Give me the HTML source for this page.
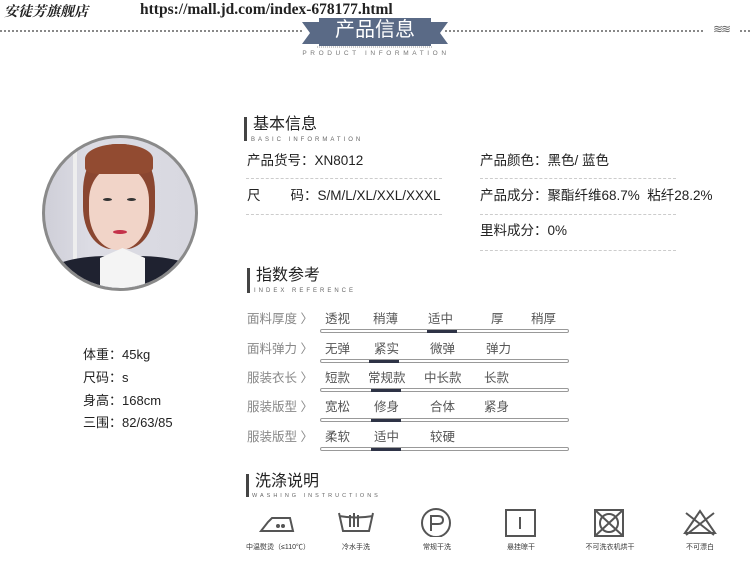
<!DOCTYPE html>
<html><head><meta charset="utf-8"><style>
*{margin:0;padding:0;box-sizing:border-box}
body{width:750px;height:568px;background:#fff;position:relative;overflow:hidden;font-family:"Liberation Sans","Noto Sans CJK SC",sans-serif;color:#333}
.a{position:absolute;white-space:nowrap}
.dot{position:absolute;height:0;border-top:2px dotted #888}
.dash{position:absolute;height:0;border-top:1px dashed #ccc}
.bar{position:absolute;width:3px;background:#444}
.tt{position:absolute;font-size:16px;color:#222;line-height:18px}
.sub{position:absolute;font-size:6px;letter-spacing:3px;color:#666;line-height:6px}
.r{position:absolute;font-size:13.5px;color:#222;line-height:16px}
.lb{position:absolute;font-size:12.5px;color:#888;line-height:14px}
.op{position:absolute;font-size:12.5px;color:#555;line-height:14px}
.tr{position:absolute;left:320px;width:249px;height:4px;border:1px solid #999;border-radius:2px}
.mk{position:absolute;width:30px;height:3px;background:#2e3346}
.wl{position:absolute;font-size:7px;color:#333;line-height:8px;transform:translateX(-50%)}
</style></head><body>
<div class="a" style="left:4px;top:1px;font-size:14px;font-family:'Noto Serif CJK SC',serif;font-style:italic;font-weight:bold;color:#222">安徒芳旗舰店</div>
<div class="a" style="left:140px;top:1px;font-size:15.5px;font-family:'Liberation Serif',serif;font-weight:bold;color:#222">https://mall.jd.com/index-678177.html</div>
<div class="dot" style="left:0;top:30px;width:302px"></div>
<div class="dot" style="left:312px;top:30px;width:0"></div>
<div class="dot" style="left:445px;top:30px;width:258px"></div>
<div class="a" style="left:713px;top:22px;font-size:12px;color:#666;letter-spacing:-2px">≋≋</div>
<div class="dot" style="left:740px;top:30px;width:10px"></div>
<svg class="a" style="left:300px;top:16px" width="150" height="32">
<polygon points="2,6 22,6 22,28 2,28 10,17" fill="#5a6a86"/>
<polygon points="148,6 128,6 128,28 148,28 140,17" fill="#5a6a86"/>
<rect x="19" y="2" width="112" height="28" fill="#5a6a86"/>
<line x1="17" y1="31" x2="133" y2="31" stroke="#999" stroke-dasharray="1,1"/>
</svg>
<div class="a" style="left:319px;top:17px;width:112px;text-align:center;font-size:20px;color:#fff;line-height:26px">产品信息</div>
<div class="a" style="left:300px;top:50px;width:152px;text-align:center;font-size:6.5px;letter-spacing:3.6px;color:#777">PRODUCT INFORMATION</div>

<!-- photo -->
<div class="a" style="left:42px;top:135px;width:156px;height:156px;border-radius:50%;border:3px solid #8a8a8a;overflow:hidden;background:linear-gradient(90deg,#cfcfd8 0,#dcdce4 30%,#d8d8e0 100%)">
<div class="a" style="left:28px;top:0;width:4px;height:156px;background:#eee"></div>
<div class="a" style="left:38px;top:6px;width:72px;height:105px;border-radius:45% 45% 40% 40%;background:#8a4630"></div>
<div class="a" style="left:44px;top:30px;width:60px;height:82px;border-radius:40% 40% 48% 48%;background:#f1d4c8"></div>
<div class="a" style="left:40px;top:6px;width:68px;height:30px;border-radius:50% 50% 20% 20%;background:#924b31"></div>
<div class="a" style="left:58px;top:60px;width:9px;height:3px;background:#333;border-radius:50%"></div>
<div class="a" style="left:82px;top:60px;width:9px;height:3px;background:#333;border-radius:50%"></div>
<div class="a" style="left:68px;top:92px;width:14px;height:4px;background:#c4324a;border-radius:50%"></div>
<div class="a" style="left:0;top:118px;width:156px;height:50px;background:#1f2230;border-radius:40% 40% 0 0"></div>
<div class="a" style="left:55px;top:110px;width:45px;height:50px;background:#f4f4f4;clip-path:polygon(0 20%,50% 0,100% 20%,100% 100%,0 100%)"></div>
</div>
<div class="r" style="left:83px;top:347px;font-size:13px">体重：45kg</div>
<div class="r" style="left:83px;top:370px;font-size:13px">尺码：s</div>
<div class="r" style="left:83px;top:393px;font-size:13px">身高：168cm</div>
<div class="r" style="left:83px;top:415px;font-size:13px">三围：82/63/85</div>

<!-- basic info -->
<div class="bar" style="left:244px;top:117px;height:24px"></div>
<div class="tt" style="left:253px;top:116px">基本信息</div>
<div class="sub" style="left:251px;top:137px">BASIC INFORMATION</div>
<div class="r" style="left:247px;top:153px">产品货号：XN8012</div>
<div class="r" style="left:247px;top:188px">尺&nbsp;&nbsp;&nbsp;&nbsp;&nbsp;&nbsp;&nbsp;&nbsp;码：S/M/L/XL/XXL/XXXL</div>
<div class="r" style="left:480px;top:153px">产品颜色：黑色/ 蓝色</div>
<div class="r" style="left:480px;top:188px">产品成分：聚酯纤维68.7%&nbsp;&nbsp;粘纤28.2%</div>
<div class="r" style="left:480px;top:223px">里料成分：0%</div>
<div class="dash" style="left:246px;top:178px;width:196px"></div>
<div class="dash" style="left:246px;top:214px;width:196px"></div>
<div class="dash" style="left:480px;top:178px;width:196px"></div>
<div class="dash" style="left:480px;top:214px;width:196px"></div>
<div class="dash" style="left:480px;top:250px;width:196px"></div>

<!-- index -->
<div class="bar" style="left:247px;top:268px;height:25px"></div>
<div class="tt" style="left:256px;top:267px">指数参考</div>
<div class="sub" style="left:254px;top:288px">INDEX REFERENCE</div>

<div class="lb" style="left:247px;top:312px">面料厚度 〉</div>
<div class="op" style="left:325px;top:312px">透视</div><div class="op" style="left:373px;top:312px">稍薄</div><div class="op" style="left:428px;top:312px">适中</div><div class="op" style="left:491px;top:312px">厚</div><div class="op" style="left:531px;top:312px">稍厚</div>
<div class="tr" style="top:329px"></div><div class="mk" style="left:427px;top:330px"></div>

<div class="lb" style="left:247px;top:342px">面料弹力 〉</div>
<div class="op" style="left:325px;top:342px">无弹</div><div class="op" style="left:374px;top:342px">紧实</div><div class="op" style="left:430px;top:342px">微弹</div><div class="op" style="left:486px;top:342px">弹力</div>
<div class="tr" style="top:359px"></div><div class="mk" style="left:369px;top:360px"></div>

<div class="lb" style="left:247px;top:371px">服装衣长 〉</div>
<div class="op" style="left:325px;top:371px">短款</div><div class="op" style="left:368px;top:371px">常规款</div><div class="op" style="left:424px;top:371px">中长款</div><div class="op" style="left:484px;top:371px">长款</div>
<div class="tr" style="top:388px"></div><div class="mk" style="left:371px;top:389px"></div>

<div class="lb" style="left:247px;top:400px">服装版型 〉</div>
<div class="op" style="left:325px;top:400px">宽松</div><div class="op" style="left:374px;top:400px">修身</div><div class="op" style="left:430px;top:400px">合体</div><div class="op" style="left:484px;top:400px">紧身</div>
<div class="tr" style="top:418px"></div><div class="mk" style="left:371px;top:419px"></div>

<div class="lb" style="left:247px;top:430px">服装版型 〉</div>
<div class="op" style="left:325px;top:430px">柔软</div><div class="op" style="left:374px;top:430px">适中</div><div class="op" style="left:430px;top:430px">较硬</div>
<div class="tr" style="top:447px"></div><div class="mk" style="left:371px;top:448px"></div>

<!-- washing -->
<div class="bar" style="left:246px;top:474px;height:23px"></div>
<div class="tt" style="left:255px;top:473px">洗涤说明</div>
<div class="sub" style="left:252px;top:493px;font-size:5.5px">WASHING INSTRUCTIONS</div>

<svg class="a" style="left:0;top:505px" width="750" height="32" fill="none" stroke="#555" stroke-width="2">
<path d="M261,26 L293,26 L290,13 L272,13 L268,17 Z" /><circle cx="278" cy="21" r="1" fill="#555"/><circle cx="283" cy="21" r="1" fill="#555"/>
<path d="M339,8 L343,26 L369,26 L373,8 M339,11 Q356,14 373,11"/><path d="M350,10 L350,22 M354,8 L354,22 M358,10 L358,22"/>
<circle cx="436" cy="18" r="14"/><path d="M431,26 L431,11 L438,11 Q443,11 443,15 Q443,19 438,19 L431,19"/>
<rect x="506" y="5" width="29" height="26"/><path d="M520,12 L520,24"/>
<rect x="595" y="5" width="28" height="26"/><circle cx="609" cy="18" r="9"/><path d="M595,5 L623,31 M623,5 L595,31"/>
<path d="M685,28 L700,6 L715,28 Z M686,8 L714,30 M714,8 L686,30"/>
</svg>
<div class="wl" style="left:278px;top:544px">中温熨烫（≤110℃）</div>
<div class="wl" style="left:356px;top:544px">冷水手洗</div>
<div class="wl" style="left:437px;top:544px">常规干洗</div>
<div class="wl" style="left:521px;top:544px">悬挂晾干</div>
<div class="wl" style="left:610px;top:544px">不可洗衣机烘干</div>
<div class="wl" style="left:700px;top:544px">不可漂白</div>
</body></html>
